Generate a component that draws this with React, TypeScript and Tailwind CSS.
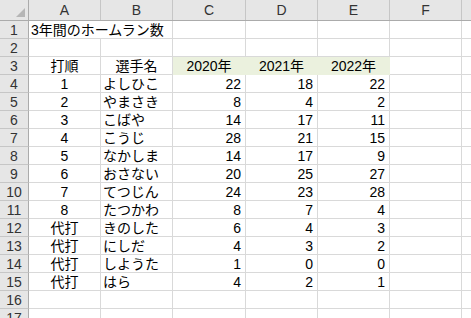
import React from "react";

type Align = "left" | "center" | "right";

const colWidths = ["w-[72px]", "w-[72px]", "w-[73px]", "w-[72px]", "w-[72px]", "w-[72px]"];
const colLetters = ["A", "B", "C", "D", "E", "F"];

const rows: string[][] = [
  ["3年間のホームラン数", "", "", "", "", ""],
  ["", "", "", "", "", ""],
  ["打順", "選手名", "2020年", "2021年", "2022年", ""],
  ["1", "よしひこ", "22", "18", "22", ""],
  ["2", "やまさき", "8", "4", "2", ""],
  ["3", "こばや", "14", "17", "11", ""],
  ["4", "こうじ", "28", "21", "15", ""],
  ["5", "なかしま", "14", "17", "9", ""],
  ["6", "おさない", "20", "25", "27", ""],
  ["7", "てつじん", "24", "23", "28", ""],
  ["8", "たつかわ", "8", "7", "4", ""],
  ["代打", "きのした", "6", "4", "3", ""],
  ["代打", "にしだ", "4", "3", "2", ""],
  ["代打", "しようた", "1", "0", "0", ""],
  ["代打", "はら", "4", "2", "1", ""],
  ["", "", "", "", "", ""],
  ["", "", "", "", "", ""],
];

function alignFor(row: number, col: number): Align {
  if (row === 0) return "left";
  if (row === 2) return "center";
  if (col === 0) return "center";
  if (col === 1) return "left";
  return "right";
}

function Cell({ text, width, align, fill, overflow }: { text: string; width: string; align: Align; fill: boolean; overflow: boolean }) {
  const justify = align === "left" ? "justify-start pl-[2px]" : align === "right" ? "justify-end pr-[4px]" : "justify-center";
  return (
    <div
      className={`${width} h-[18px] shrink-0 flex items-center whitespace-nowrap border-b ${justify} ${
        fill ? "bg-[#ebf1de] border-[#ebf1de]" : "border-[#d9d9d9]"
      } ${overflow ? "border-r-transparent overflow-visible relative z-10" : "border-r overflow-hidden"}`}
    >
      {text}
    </div>
  );
}

export default function App() {
  return (
    <div
      className="w-[471px] h-[318px] overflow-hidden bg-white text-[14px] leading-none text-black"
      style={{ fontFamily: '"Liberation Sans", "Noto Sans CJK JP", sans-serif' }}
    >
      {/* column headers */}
      <div className="flex h-[21px] bg-[#e6e6e6] border-b border-[#ababab]">
        <div className="w-[29px] shrink-0 border-r border-[#ababab] relative">
          <svg className="absolute right-[3px] bottom-[3px]" width="9" height="9" viewBox="0 0 9 9">
            <polygon points="9,0 9,9 0,9" fill="#b6b6b6" />
          </svg>
        </div>
        {colLetters.map((c, i) => (
          <div key={c} className={`${colWidths[i]} shrink-0 flex items-center justify-center border-r border-[#c6c6c6] text-[#333]`}>
            {c}
          </div>
        ))}
        <div className="flex-1" />
      </div>

      {rows.map((r, ri) => (
        <div key={ri} className="flex">
          <div className="w-[29px] h-[18px] shrink-0 flex items-center justify-center bg-[#e6e6e6] border-r border-b border-r-[#ababab] border-b-[#c6c6c6] text-[#333]">
            {ri + 1}
          </div>
          {r.map((t, ci) => (
            <Cell
              key={ci}
              text={t}
              width={colWidths[ci]}
              align={alignFor(ri, ci)}
              fill={ri === 2 && ci >= 2 && ci <= 4}
              overflow={ri === 0 && ci === 0}
            />
          ))}
          <div className="flex-1 h-[18px] border-b border-[#d9d9d9]" />
        </div>
      ))}
    </div>
  );
}
